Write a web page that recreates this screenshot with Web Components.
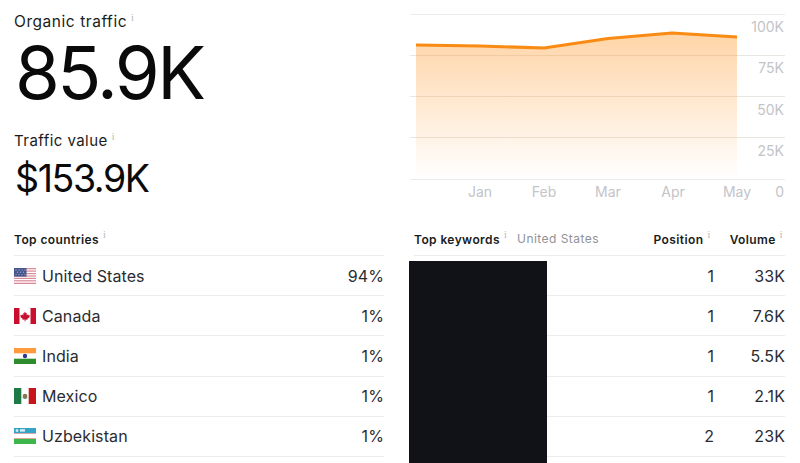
<!DOCTYPE html>
<html lang="en"><head><meta charset="utf-8"><title>Overview</title>
<style>
html,body{margin:0;padding:0;background:#fff;height:463px;overflow:hidden}
body{font-family:Inter,"Liberation Sans",sans-serif;color:#111}
</style></head><body>
<x-overview>
  <x-stat slot="stats" label="Organic traffic" value="85.9K" big></x-stat>
  <x-stat slot="stats" label="Traffic value" value="$153.9K"></x-stat>
  <x-chart slot="chart"></x-chart>
  <x-panel slot="countries">
    <x-head slot="head" label="Top countries"></x-head>
    <x-row flag="us" name="United States" a="94%"></x-row>
    <x-row flag="ca" name="Canada" a="1%"></x-row>
    <x-row flag="in" name="India" a="1%"></x-row>
    <x-row flag="mx" name="Mexico" a="1%"></x-row>
    <x-row flag="uz" name="Uzbekistan" a="1%"></x-row>
  </x-panel>
  <x-panel slot="keywords" redacted>
    <x-head slot="head" label="Top keywords" sub="United States" c1="Position" c2="Volume"></x-head>
    <x-row a="1" b="33K"></x-row>
    <x-row a="1" b="7.6K"></x-row>
    <x-row a="1" b="5.5K"></x-row>
    <x-row a="1" b="2.1K"></x-row>
    <x-row a="2" b="23K"></x-row>
  </x-panel>
</x-overview>
<script>
const I='<sup class="i">i</sup>';
const IST='.i{font:400 10px/1 "Liberation Serif",serif;color:#b4b7bb;margin-left:4px;vertical-align:6px}';
class Base extends HTMLElement{
  html(s){this.attachShadow({mode:'open'}).innerHTML=s}
}
customElements.define('x-overview',class extends Base{connectedCallback(){this.html(`<style>
:host{display:grid;width:800px;height:463px;box-sizing:border-box;grid-template-columns:370px 375px;column-gap:26px;grid-template-rows:auto 1fr;padding:0 0 0 14px;overflow:hidden}
.s{display:flex;flex-direction:column;height:216px}
.k{margin-left:4px;margin-right:0}
</style>
<div class="s"><slot name="stats"></slot></div>
<div><slot name="chart"></slot></div>
<div><slot name="countries"></slot></div>
<div class="k"><slot name="keywords"></slot></div>`)}});
customElements.define('x-stat',class extends Base{connectedCallback(){const b=this.hasAttribute('big');this.html(`<style>
:host{display:block}
.l{font:400 ${b?15.5:15}px/20px Inter,"Liberation Sans",sans-serif;letter-spacing:${b?.55:.45}px;color:#1a1c20;padding-top:${b?12:0}px}
.v{font-family:Inter,"Liberation Sans",sans-serif;font-weight:400;color:#0a0a0b;white-space:nowrap;
 font-size:${b?72.5:37.5}px;line-height:${b?72:40}px;letter-spacing:${b?-2.5:-1.4}px;margin:${b?'5px 0 22px':'8px 0 0'};padding-left:1px}
${IST}</style><div class="l">${this.getAttribute('label')}${I}</div><div class="v">${this.getAttribute('value')}</div>`)}});
customElements.define('x-chart',class extends Base{connectedCallback(){
const grid=[14.5,55.5,96.5,137.5,179.5].map((y,i)=>`<line x1="0" x2="375" y1="${y}" y2="${y}" stroke="${i==0||i==4?'#ececee':'#e9e6e2'}"/>`).join('');
const yl=[['100K',32],['75K',73],['50K',115],['25K',156],['0',197]].map(([t,y])=>`<text x="374" y="${y}" text-anchor="end">${t}</text>`).join('');
const xl=[['Jan',70],['Feb',134],['Mar',198],['Apr',263],['May',327]].map(([t,x])=>`<text x="${x}" y="197" text-anchor="middle">${t}</text>`).join('');
const pts='6,45 70,46 134,48 198,38.5 262,33 327,37';
this.html(`<style>:host{display:block}svg{display:block}text{font:400 14px Inter,"Liberation Sans",sans-serif;fill:#c3c4c7}</style>
<svg width="375" height="216" viewBox="0 0 375 216" role="img" aria-label="Organic traffic chart">
<defs><linearGradient id="g" x1="0" y1="0" x2="0" y2="1"><stop offset="0" stop-color="#ff9a2e" stop-opacity=".42"/><stop offset="1" stop-color="#ff9a2e" stop-opacity="0"/></linearGradient></defs>
${grid}
<polygon points="${pts} 327,179 6,179" fill="url(#g)"/>
<polyline points="${pts}" fill="none" stroke="#f98b14" stroke-width="3" stroke-linejoin="round"/>
${yl}${xl}</svg>`)}});
customElements.define('x-panel',class extends Base{connectedCallback(){const r=this.hasAttribute('redacted');this.html(`<style>
:host{display:block;position:relative}
.r{position:absolute;left:-5px;top:45px;width:138px;height:210px;background:#111218}
</style><slot name="head"></slot><slot></slot>${r?'<div class="r"></div>':''}`)}});
customElements.define('x-head',class extends Base{connectedCallback(){const g=n=>this.getAttribute(n);this.html(`<style>
:host{display:flex;align-items:center;height:40px;box-sizing:border-box;padding-top:7px;border-bottom:1px solid #ebecee;font:600 12px/16px Inter,"Liberation Sans",sans-serif;letter-spacing:.4px;color:#1a1c20;white-space:nowrap}
.sub{font-weight:400;color:#8f9297;margin-left:10px;font-size:12px;letter-spacing:.45px}
.c1{margin-left:auto}.c2{margin-left:19px;margin-right:2px}
${IST}.i{margin-left:4px}</style><span>${g('label')}${I}</span>${g('sub')?`<span class="sub">${g('sub')}</span>`:''}${g('c1')?`<span class="c1">${g('c1')}${I}</span><span class="c2">${g('c2')}${I}</span>`:''}`)}});
const F={
us:`<rect width="22" height="16" fill="#fff"/><g fill="#d98a98"><rect width="22" height="1.3"/><rect y="2.5" width="22" height="1.2"/><rect y="5" width="22" height="1.2"/><rect y="7.4" width="22" height="1.2"/><rect y="9.8" width="22" height="1.2"/><rect y="12.2" width="22" height="1.2"/><rect y="14.7" width="22" height="1.3"/></g><rect width="12.5" height="8.6" fill="#46568c"/><g fill="#9aa5c9"><circle cx="2" cy="2" r=".7"/><circle cx="5" cy="2" r=".7"/><circle cx="8" cy="2" r=".7"/><circle cx="11" cy="2" r=".7"/><circle cx="3.5" cy="4.3" r=".7"/><circle cx="6.5" cy="4.3" r=".7"/><circle cx="9.5" cy="4.3" r=".7"/><circle cx="2" cy="6.6" r=".7"/><circle cx="5" cy="6.6" r=".7"/><circle cx="8" cy="6.6" r=".7"/><circle cx="11" cy="6.6" r=".7"/></g>`,
ca:`<rect width="22" height="16" fill="#fff"/><rect width="5.5" height="16" fill="#c8102e"/><rect x="16.5" width="5.5" height="16" fill="#c8102e"/><path d="M11 3.6l1 1.9 1-.5-.4 2.4 1.4-1.2.4 1 1.4-.3-.5 1.6.6.4-2.5 1.9.3 1-2.2-.3v1.8h-.9v-1.8l-2.2.3.3-1-2.5-1.9.6-.4-.5-1.6 1.4.3.4-1 1.4 1.2L9 5l1 .5z" fill="#c8102e"/>`,
in:`<rect width="22" height="16" fill="#fff"/><rect width="22" height="5.3" fill="#ff9a3c"/><rect y="10.7" width="22" height="5.3" fill="#2e8b2e"/><circle cx="11" cy="8" r="2.2" fill="#2d3a8c"/>`,
mx:`<rect width="22" height="16" fill="#fff"/><rect width="7.3" height="16" fill="#1e7a45"/><rect x="14.7" width="7.3" height="16" fill="#c4161c"/><circle cx="11" cy="8" r="2.3" fill="#8f7350"/><path d="M8.6 9.6q2.4 2 4.8 0" stroke="#4d8f60" fill="none"/>`,
uz:`<rect width="22" height="16" fill="#fff"/><rect width="22" height="5.2" fill="#35a5c5"/><rect y="10.8" width="22" height="5.2" fill="#3cb54a"/><rect y="5.2" width="22" height=".5" fill="#d66"/><rect y="10.3" width="22" height=".5" fill="#d66"/><g fill="#d8eef5"><circle cx="3" cy="2.6" r="1.4"/><rect x="6" y="1.2" width="5" height="2.4"/></g>`};
customElements.define('x-row',class extends Base{connectedCallback(){const g=n=>this.getAttribute(n);this.html(`<style>
:host{display:flex;align-items:center;height:40.2px;box-sizing:border-box;border-bottom:1px solid #ebecee;font:400 16px/20px Inter,"Liberation Sans",sans-serif;letter-spacing:.1px;color:#2a2c31;white-space:nowrap}
svg{flex:none;margin-right:6px;display:block}
.n{flex:1}.a{text-align:right}.b{width:71px;text-align:right}
</style>${g('flag')?`<svg width="22" height="16" viewBox="0 0 22 16" aria-hidden="true">${F[g('flag')]}</svg><span class="n">${g('name')}</span>`:'<span class="n"></span>'}<span class="a">${g('a')}</span>${g('b')?`<span class="b">${g('b')}</span>`:''}`)}});
</script>
</body></html>
